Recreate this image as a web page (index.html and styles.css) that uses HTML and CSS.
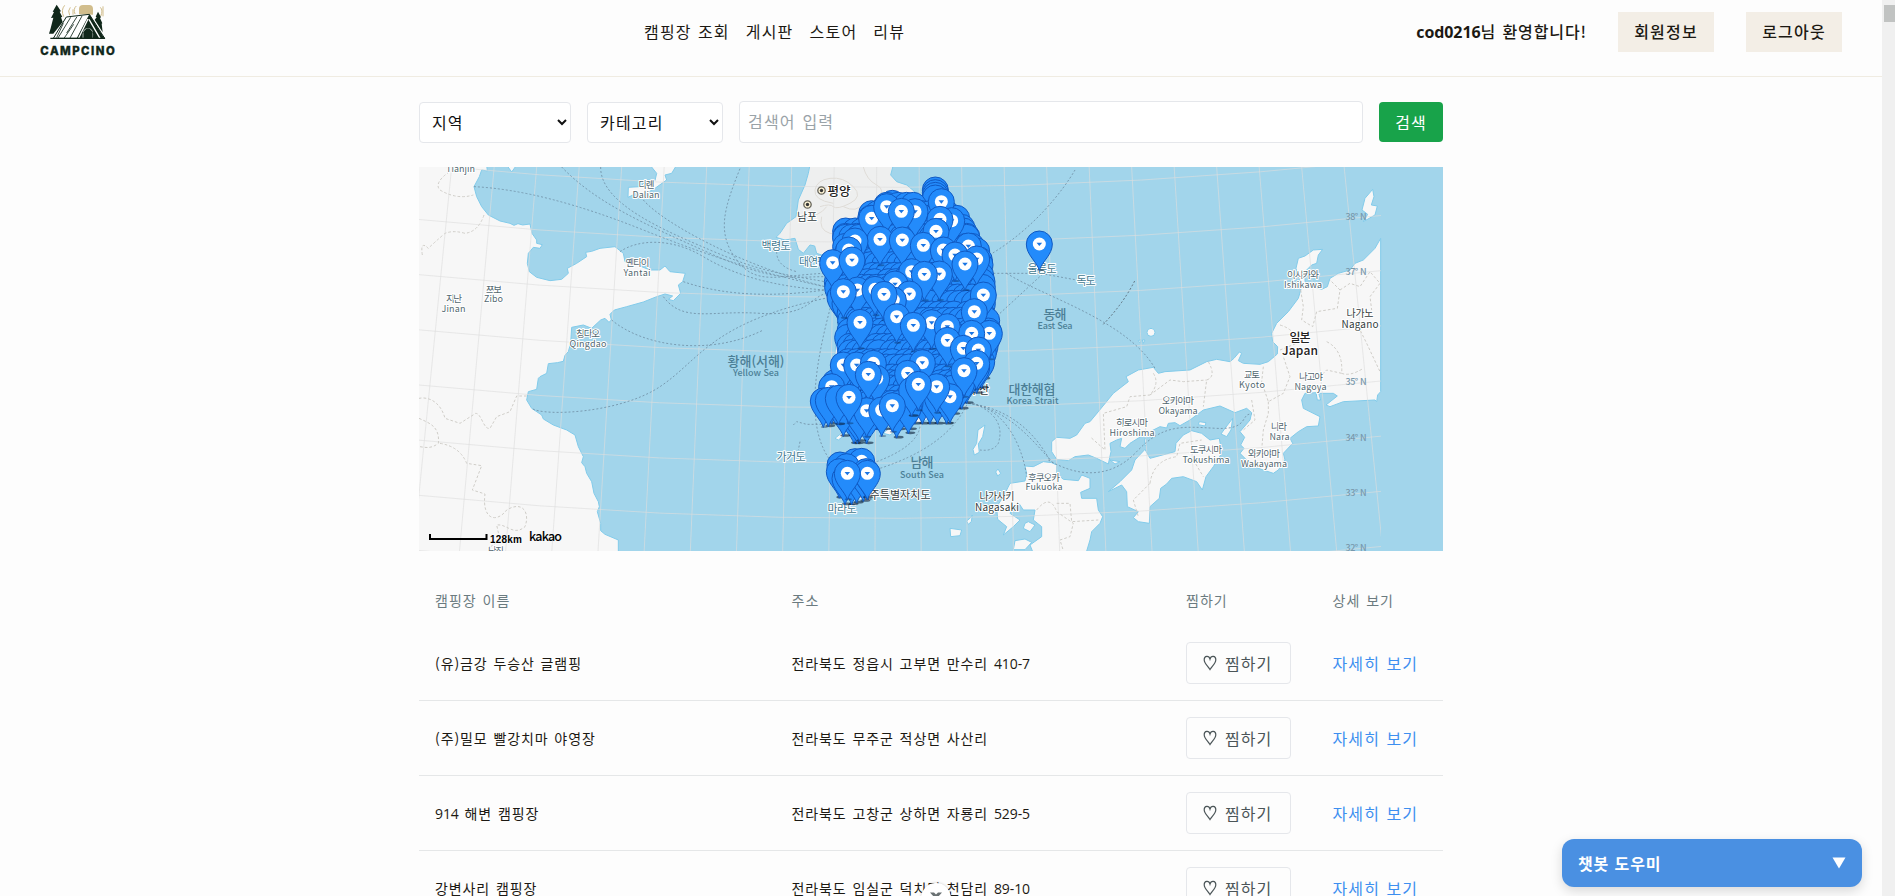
FILE: index.html
```html
<!DOCTYPE html>
<html lang="ko">
<head>
<meta charset="utf-8">
<title>CAMPCINO</title>
<link rel="stylesheet" href="styles.css">
</head>
<body>
<div class="window">
<div class="page">
<header class="topbar">
  <a class="brand"><svg width="80" height="60" viewBox="114 0 240 180">
    <g fill="#d1bd8c"><path d="M237 43V27q0-12 12-12h19q11 0 11 12v17z"/><path d="M194 16q-12 14-3 34M211 22q-9 10-2 24M229 18q-10 8-4 24M219 28v16M301 22q9 9 1 27M309 19v30" fill="none" stroke="#d1bd8c" stroke-width="3"/></g>
    <g fill="#10271a"><path d="M170 14l13 20-4 1 8 16-4 1 5 14-28 35h-13l5-16 8-32-7 1 9-18-4-1z"/><path d="M294 35l9 17-3 2 7 16-2 1 3 26-24-38 6-7-3-2z"/></g>
    <path d="M199 51L268 43 314 115H160z" fill="#fff" stroke="#10271a" stroke-width="3"/>
    <path d="M268 43L230 115h18q-2-31 16-31t15 31h34z" fill="#10271a"/>
    <path d="M264 57l-28 57M267 58l33 57" stroke="#fff" stroke-width="4"/>
    <path d="M212 52l-38 62M231 50l-31 49M246 48l-36 66M190 70l-20 43M221 73l-29 42" stroke="#10271a" stroke-width="2.5"/>
    <path d="M250 115v-18q14-24 28 0v18z" fill="#10271a"/><path d="M151 115h164" stroke="#10271a" stroke-width="4"/>
    <text x="121" y="164" textLength="223" class="brand-name">CAMPCINO</text>
  </svg></a>
  <nav class="menu"><a>캠핑장 조회</a><a>게시판</a><a>스토어</a><a>리뷰</a></nav>
  <div class="account"><span class="welcome"><b>cod0216</b>님 환영합니다!</span><button class="account-btn">회원정보</button><button class="account-btn">로그아웃</button></div>
</header>
<main class="content">
  <form class="search">
    <select class="field region"><option>지역</option></select>
    <select class="field category"><option>카테고리</option></select>
    <input class="field keyword" placeholder="검색어 입력">
    <button class="search-btn" type="button">검색</button>
  </form>
  <svg class="map" viewBox="419 167 1024 384">
    <defs>
      <path id="pin-body" d="M0 0C-2.500-9-13-15.500-13-26.500A13 13 0 0 1 13-26.500C13-15.500 2.500-9 0 0Z" fill="#238bfb" stroke="#1059c2"/>
      <g id="pin-back"><ellipse cx="2" cy="-1" rx="5" ry="1.300" fill="#071b33" opacity=".6"/><use href="#pin-body"/></g>
      <g id="pin"><ellipse cx="1" cy="-.5" rx="3.500" ry="1" fill="#071b33" opacity=".35"/><use href="#pin-body"/><circle cy="-26.500" r="6.500" fill="#fff"/><path d="M-2.800-27.800h5.600L0-24.500z" fill="#1b76e3"/></g>
      <clipPath id="tiles"><path d="M419 167h962v384H419z"/></clipPath>
    </defs>
    <g class="land" transform="translate(410 90) scale(.33333)">
      <path d="M20 225H230L232 243 215 240 208 260 192 290 200 320 215 350 235 375 270 393 300 400 312 406 324 401 338 405 360 402 366 430 380 450 380 460 397 464 390 475 370 472 355 490 352 520 358 545 380 562 420 572 455 568 475 550 472 535 500 520 530 500 527 487 545 484 570 475 615 470 640 490 645 515 690 528 720 540 750 540 765 528 780 545 826 550 818 575 805 585 812 610 790 632 775 628 788 618 765 612 740 620 700 636 650 650 613 660 600 673 604 690 597 697 585 685 572 690 545 715 520 705 485 712 482 760 475 785 465 796 460 814 442 818 415 821 410 850 390 860 385 865 380 898 355 905 350 930 365 955 395 975 400 987 430 1005 470 1020 495 1035 505 1070 520 1100 515 1118 525 1130 530 1150 545 1175 552 1210 565 1235 568 1250 562 1265 572 1300 572 1322 585 1333 625 1350V1390H20z"/>
      <path d="M720 225L740 250 735 272 712 270 690 290 655 292 654 322 680 310 700 315 735 295 770 270 765 255 785 250 800 225zM290 225L305 246 320 225z"/>
      <path class="north" d="M1200 225L1195 250 1185 285 1165 330 1158 380 1130 400 1110 430 1098 442 1125 450 1155 445 1165 478 1180 490 1200 465 1214 468 1220 490 1250 500 1300 600 1400 700H1580V340L1530 318 1490 285 1460 275 1442 255 1450 225z"/>
      <path d="M1300 500L1550 350 1660 480 1740 640 1720 830 1640 960 1490 1010 1290 1010 1270 850z"/>
      <path d="M1275 1045l25-20 5 10-20 15zM1420 1030l30-30 10 20-20 15zM1725 1005L1718 1040 1705 1062 1708 1087 1693 1095 1689 1078 1700 1060 1704 1020zM1620 1315L1655 1320 1650 1337 1622 1340zM1687 1275l-3 20-9 8-5-10 12-10zM1764 1137l8 13-9 8-6-12z"/>
    </g>
    <g class="land" transform="translate(1050 90) scale(.33333)">
      <path d="M992 445L975 475 940 510 915 520 900 540 865 550 840 565 832 590 815 598 775 585 765 575 765 545 785 525 800 520 805 495 818 478 790 480 765 498 745 505 738 535 745 560 755 590 745 625 715 665 680 700 665 730 668 755 683 770 682 792 655 815 630 823 580 820 565 812 575 790 568 786 552 805 540 815 500 808 470 815 420 840 345 845 325 850 310 832 265 840 228 860 235 875 190 910 145 965 120 995 105 1000 80 1035 60 1045 20 1042 5 1055V1085L20 1108 55 1112 75 1100 115 1095 140 1105 175 1122 183 1085 180 1060 200 1050 215 1045 210 1070 225 1075 240 1060 280 1035 330 1010 350 1014 355 1000 375 998 390 1007 420 990 460 960 510 948 555 968 590 955 605 968 600 990 570 1025 584 1042 572 1065 582 1075 570 1090 590 1110 610 1120 610 1130 670 1150 685 1140 705 1110 700 1090 728 1060 720 1045 745 1025 770 1010 805 1008 810 980 760 955 755 930 765 910 798 908 802 930 812 930 806 910 850 910 862 918 828 945 840 950 880 935 975 930 980 935 983 915 992 905z"/>
      <path d="M285 1078L300 1105 375 1085 378 1060 400 1035 425 1022 455 1030 480 1050 508 1045 515 1090 490 1130 468 1160 457 1200 440 1175 400 1160 365 1165 350 1182 332 1195 328 1225 300 1250 298 1300 265 1295 250 1283 265 1265 232 1250 230 1205 215 1185 175 1205 210 1175 245 1140 255 1110zM548 985L543 1020 530 1040 513 1032 525 1015zM448 995L468 998 465 1008 445 1004zM180 1110L210 1115 195 1122zM284 1046h5v20h-5z"/>
      <path d="M-75 1128L-50 1130-20 1115 5 1118 20 1125 20 1150 40 1168 85 1172 95 1155 120 1165 120 1195 92 1207 95 1225 140 1225 145 1260 158 1280 150 1300 125 1325 120 1350 108 1390H-50L-60 1365-25 1340-25 1310-50 1290-45 1260-80 1260-92 1242-110 1250-120 1270-90 1290-110 1310-140 1335-130 1310-157 1288-160 1250-140 1220-120 1180-75 1173-70 1150zM-65 1295l20 10-15 20-20-10 5-15zM-105 1352l30-5 20 10-20 22h-35zM968 298L972 320 964 345 982 348 975 375 940 395 953 373 936 360 945 325z"/>
      <circle cx="303" cy="727" r="12"/><path d="M265 752l8-3-2 11zM277 750l8 0-5 10z"/>
    </g>
    <g id="graticule" clip-path="url(#tiles)"></g>
    <g class="province" transform="translate(410 90) scale(.33333)"><path d="M118 245Q70 280 90 300 140 330 190 315M222 375Q205 425 165 430 130 420 105 430 70 460 55 475 30 450 37 495M350 918H320L300 965 260 980 240 1015C220 1020 215 970 197 970L150 1000 105 985C90 930 50 920 27 925M27 985C60 1000 90 1010 85 1060 60 1080 40 1070 27 1070M90 1060Q150 1070 170 1120L215 1127 187 1200 225 1212C215 1290 260 1300 290 1260 340 1230 360 1270 345 1310 310 1340 290 1300 260 1305L270 1350 235 1375"/></g>
    <path class="district" transform="translate(410 90) scale(.33333)" d="M1360 231Q1370 270 1400 285T1400 330 1440 320M1270 340Q1210 330 1215 300T1260 265 1330 290 1320 340 1270 350 1230 350M1170 385Q1230 380 1250 350M1235 380Q1225 420 1260 430T1290 410M1300 350Q1340 370 1360 340"/>
    <g class="province" transform="translate(1050 90) scale(.33333)"><path d="M752 600L760 650 755 690 788 710 800 665 862 655 870 600 840 570M870 600L900 580 930 590 960 545 990 580 960 620 965 660M690 705Q740 720 740 760L690 780M830 755Q880 780 875 850L830 840 800 870M925 710L950 760 990 845M875 850Q900 860 940 835M475 815Q500 860 470 870L460 950M310 850Q330 880 300 915L240 920 230 950 160 970 165 1080 120 1040M300 915L360 870 400 875 470 870M640 830L635 875 655 935 700 910 720 860 700 800M655 935L655 970 640 1020 635 1080M605 930L615 990 580 1020M300 1180Q310 1110 380 1100L390 1060 455 1050M300 1180L250 1230 265 1280M430 1110L460 1160M-40 1260Q0 1210 20 1265L70 1300 60 1340 30 1350 40 1382M20 1240L60 1240 65 1295 145 1290"/></g>
    <g class="ferry" transform="translate(410 90) scale(.33333)"><path d="M192 290Q400 300 700 420T1245 590M455 231C560 340 700 400 900 490S1150 560 1245 560M572 231C570 340 760 420 900 480S1100 550 1245 575M700 330C760 400 1000 530 1245 590M630 485C680 450 780 440 880 500S1100 590 1245 600M990 236C940 360 920 430 980 510S1110 555 1245 550M1100 485Q1100 530 1160 545M820 575C950 620 1100 620 1245 600M760 620C820 700 900 660 1050 670S1200 620 1250 610M605 690C700 770 900 800 1060 720M1245 625C900 700 870 810 750 890S400 980 365 955M1270 620C1220 800 1180 1000 1260 1110M1150 1005L1160 995 1190 1003H1250M1170 1055L1165 1080M1995 240C1960 300 1870 420 1730 500M1770 670L1900 550M1750 550H1890L2000 570M1790 550C1900 620 2150 690 2235 835M1675 940C1790 950 1840 1080 1850 1160M1675 940C1790 960 1850 1030 1930 1120M1675 940C1840 960 1900 1080 1920 1110M1690 940Q1790 980 1765 1060 1750 1085 1710 1080M1670 945Q1610 1070 1410 1135M1530 1010Q1520 1070 1400 1115"/></g>
    <g class="ferry" transform="translate(1050 90) scale(.33333)"><path d="M254 573Q220 640 160 703" stroke="#53616d"/><path d="M-5 1110C80 1160 180 1170 260 1085S400 1010 500 1015 570 970 605 972"/></g>
    <g id="labels"></g>
    <g transform="translate(821.500 190.500)"><circle r="3.700" fill="#fff5d6" stroke="#66645b" stroke-width="1.300"/><circle r="1.700" fill="#333"/></g>
    <g transform="translate(807.500 204.500)"><circle r="3.700" fill="#fff5d6" stroke="#66645b" stroke-width="1.300"/><circle r="1.700" fill="#333"/></g>
    <g id="pins"></g>
    <path d="M430 534v5h56.500v-5" fill="none" stroke="#000" stroke-width="2"/>
    <text class="scale" x="490" y="543" textLength="32">128km</text><text class="kakao" x="529" y="541" textLength="33">kakao</text>
  </svg>
  <table class="camps">
    <thead><tr><th class="c-name">캠핑장 이름</th><th class="c-addr">주소</th><th class="c-like">찜하기</th><th>상세 보기</th></tr></thead>
    <tbody>
      <tr><td>(유)금강 두승산 글램핑</td><td>전라북도 정읍시 고부면 만수리 <span class="num">410-7</span></td><td><button class="like"><svg class="heart" viewBox="0 0 14 16"><path d="M7 14.500C5 11 1.200 8.500 1.200 4.700 1.200.4 6 .2 7 4 8 .2 12.800.4 12.800 4.700 12.800 8.500 9 11 7 14.500z"/></svg><span>찜하기</span></button></td><td><a class="more">자세히 보기</a></td></tr>
      <tr><td>(주)밀모 빨강치마 야영장</td><td>전라북도 무주군 적상면 사산리</td><td><button class="like"><svg class="heart" viewBox="0 0 14 16"><path d="M7 14.500C5 11 1.200 8.500 1.200 4.700 1.200.4 6 .2 7 4 8 .2 12.800.4 12.800 4.700 12.800 8.500 9 11 7 14.500z"/></svg><span>찜하기</span></button></td><td><a class="more">자세히 보기</a></td></tr>
      <tr><td><span class="num">914</span> 해변 캠핑장</td><td>전라북도 고창군 상하면 자룡리 <span class="num">529-5</span></td><td><button class="like"><svg class="heart" viewBox="0 0 14 16"><path d="M7 14.500C5 11 1.200 8.500 1.200 4.700 1.200.4 6 .2 7 4 8 .2 12.800.4 12.800 4.700 12.800 8.500 9 11 7 14.500z"/></svg><span>찜하기</span></button></td><td><a class="more">자세히 보기</a></td></tr>
      <tr><td>강변사리 캠핑장</td><td>전라북도 임실군 덕치면 천담리 <span class="num">89-10</span></td><td><button class="like"><svg class="heart" viewBox="0 0 14 16"><path d="M7 14.500C5 11 1.200 8.500 1.200 4.700 1.200.4 6 .2 7 4 8 .2 12.800.4 12.800 4.700 12.800 8.500 9 11 7 14.500z"/></svg><span>찜하기</span></button></td><td><a class="more">자세히 보기</a></td></tr>
    </tbody>
  </table>
</main>
<div class="close-bubble"><svg width="14" height="14" viewBox="0 0 14 14"><path d="M1 1.500h4l2 2 2-2h4L9 6l4 5H9L7 8.500 5 11H1l4-5z" fill="#6a7173"/></svg></div>
<div class="chatbot"><span>챗봇 도우미</span><svg width="14" height="12" viewBox="0 0 14 12"><path d="M.5.500h13L7 11.500z" fill="#fff"/></svg></div>
</div>
<div class="scrollbar"><div class="thumb"></div></div>
</div>
<script src="map.js"></script>
</body>
</html>
```
FILE: map.js
```javascript
const NS = 'http://www.w3.org/2000/svg';
function add(parent, tag, attrs, text) {
  const el = document.createElementNS(NS, tag);
  for (const k in attrs) el.setAttribute(k, attrs[k]);
  if (text) el.textContent = text;
  document.getElementById(parent).appendChild(el);
}
// Meridians lean outwards, parallels sag in the middle.
for (let k = 0; k < 22; k++) {
  add('graticule', 'path', { d: `M${410 + (125 + 127.5 * k) / 3} 167L${410 + (10 + 138.5 * k) / 3} 551` });
}
for (let k = 0; k < 8; k++) {
  const y = 90 + (223 + 165.5 * k) / 3;
  add('graticule', 'path', { d: `M419 ${y}Q900 ${y + 48} 1381 ${y - 4}` });
}
// [text, centre x, baseline, width, size, style]
[
  ['Tianjin', 460.5, 172, 29, 9, 'city'], ['다롄', 646.5, 188, 16, 9.5, 'city'], ['Dalian', 646, 198, 27, 9, 'city'],
  ['옌타이', 637.5, 266, 24, 9.5, 'city'], ['Yantai', 637, 276, 27, 9, 'city'],
  ['쯔보', 494, 292.5, 16, 9.5, 'city'], ['Zibo', 493.5, 302, 19, 9, 'city'],
  ['지난', 454, 302, 16, 9.5, 'city'], ['Jinan', 453.5, 312, 24, 9, 'city'],
  ['칭다오', 588, 336.5, 24, 9.5, 'city'], ['Qingdao', 588, 346.5, 37, 9, 'city'],
  ['난징', 496, 554, 16, 9.5, 'city'],
  ['평양', 839, 195.5, 23, 12.5, 'strong'], ['남포', 807, 220.5, 20, 11, 'dark'],
  ['백령도', 776, 250, 29, 11, 'isle'], ['대연평', 813, 266, 28, 11, 'isle'],
  ['황해(서해)', 756, 366, 57, 13, 'sea'], ['Yellow Sea', 756, 376, 46, 9, 'sea'],
  ['가거도', 791, 461, 29, 11, 'isle'], ['마라도', 842, 513, 29, 11, 'isle'],
  ['제주특별자치도', 895, 498.5, 71, 11, 'dark'], ['부산', 979, 393.5, 20, 11, 'dark'],
  ['남해', 922, 467, 23, 13, 'sea'], ['South Sea', 922, 478, 44, 9, 'sea'],
  ['동해', 1055, 319, 23, 13, 'sea'], ['East Sea', 1055, 328.5, 35, 9, 'sea'],
  ['대한해협', 1032, 394, 47, 13, 'sea'], ['Korea Strait', 1032.5, 404, 52, 9, 'sea'],
  ['울릉도', 1042, 273, 29, 11, 'isle'], ['독도', 1086, 284.5, 19, 11, 'isle'],
  ['후쿠오카', 1044, 480.5, 32, 9.5, 'city'], ['Fukuoka', 1044, 490, 37, 9, 'city'],
  ['나가사키', 997, 500, 35, 10, 'dark'], ['Nagasaki', 997, 511, 44, 10, 'dark'],
  ['히로시마', 1132, 426, 32, 9.5, 'city'], ['Hiroshima', 1132, 436, 45, 9, 'city'],
  ['오카야마', 1178, 404, 32, 9.5, 'city'], ['Okayama', 1178, 414, 39, 9, 'city'],
  ['도쿠시마', 1206, 453, 32, 9.5, 'city'], ['Tokushima', 1206, 463, 47, 9, 'city'],
  ['와카야마', 1264, 457, 32, 9.5, 'city'], ['Wakayama', 1264, 467, 46, 9, 'city'],
  ['나라', 1279, 430, 16, 9.5, 'city'], ['Nara', 1279.5, 440, 20, 9, 'city'],
  ['교토', 1252, 378, 16, 9.5, 'city'], ['Kyoto', 1252, 388, 26, 9, 'city'],
  ['나고야', 1311, 380, 24, 9.5, 'city'], ['Nagoya', 1310.5, 390, 32, 9, 'city'],
  ['이시카와', 1303, 278, 32, 9.5, 'city'], ['Ishikawa', 1303, 288, 38, 9, 'city'],
  ['나가노', 1360, 317, 27, 10, 'dark'], ['Nagano', 1360, 327.5, 37, 10, 'dark'],
  ['일본', 1300, 341.5, 21, 12, 'strong'], ['Japan', 1300, 354.5, 36, 12, 'strong'],
  ['38° N', 1356, 220, 21, 9, 'lat'], ['37° N', 1356, 275, 21, 9, 'lat'], ['35° N', 1356, 385, 21, 9, 'lat'],
  ['34° N', 1356, 441, 21, 9, 'lat'], ['33° N', 1356, 496, 21, 9, 'lat'], ['32° N', 1356, 551, 21, 9, 'lat'],
].forEach(([t, x, y, w, s, c]) => add('labels', 'text', { x: x - w / 2, y, textLength: w, 'font-size': s, class: 'lb ' + c }, t));

// Marker heads, in thirds of a pixel from (780, 160).
const pin = (x, y, id = 'pin') => add('pins', 'use', { href: '#' + id, x: 780 + x / 3, y: 160 + y / 3 + 26.5 });
[90, 98, 106, 114].forEach(y => pin(466, y, 'pin-back'));
pin(337, 130, 'pin-back');
// [y, first x, last x] of each dense row
[[142, 320, 400], [160, 275, 500], [180, 272, 530], [200, 262, 545], [217, 197, 550], [226, 197, 560], [235, 197, 560], [255, 197, 575], [275, 205, 590],
 [295, 185, 598], [315, 172, 600], [340, 175, 602], [365, 172, 606], [388, 173, 607], [410, 180, 606], [435, 195, 607], [460, 210, 605],
 [485, 212, 620], [510, 210, 625], [535, 203, 622], [555, 210, 615], [580, 212, 610], [600, 205, 605], [622, 200, 590], [645, 190, 560],
 [668, 165, 545], [690, 160, 520], [712, 155, 500], [735, 190, 390], [770, 222, 260]].forEach(([y, a, b], r) => {
  const n = Math.max(1, Math.round((b - a) / 24));
  for (let i = 0; i <= n; i++) {
    const edge = i === 0 || i === n;
    const j = edge ? 0 : ((i * 17 + r * 23) % 19) - 9;
    pin(a + (b - a) * i / n + j, y + ((i * 13 + r * 7) % 13) - 6, 'pin-back');
  }
});
[[190,750],[350,755],[385,742],[238,765]].forEach(([x, y]) => pin(x, y, 'pin-back'));
[[484,125],[275,175],[320,140],[405,155],[364,154],[515,182],[480,178],[468,214],[300,238],[225,243],[367,240],[565,258],[430,256],
 [490,270],[525,285],[590,297],[206,270],[158,308],[216,300],[555,312],[395,335],[478,342],[433,343],
 [232,390],[190,395],[610,405],[345,372],[285,388],[388,402],[340,420],[312,403],[583,455],[350,470],[455,488],[240,487],[628,520],
 [400,496],[502,500],[575,520],[502,541],[550,565],[595,570],[190,615],[230,615],[280,610],[427,608],[383,640],
 [590,610],[552,632],[155,680],[290,655],[265,643],[130,723],[145,721,1],[175,715,1],[260,752],[207,712],[510,710],[470,680],[395,690,1],[415,673],
 [305,750],[337,737],[225,905,1],[245,904],[180,915,1],[200,920,1],[178,935,1],[195,955,1],[215,955,1],[230,950,1],[250,945,1],[258,935,1],
 [262,940],[202,940],[778,252]].forEach(([x, y, hidden]) => pin(x, y, hidden ? 'pin-back' : 'pin'));
```
FILE: styles.css
```css
* { box-sizing: border-box; }
body { margin: 0; background: #fdfdfd; color: #1c1913; font: 16px/24px "Noto Sans CJK KR", sans-serif; letter-spacing: 1px; }
button, input, select { font: inherit; letter-spacing: inherit; color: inherit; }
.window { display: flex; height: 896px; overflow: hidden; }
.page { position: relative; flex: 1; height: 896px; overflow: hidden; }
.topbar { position: relative; display: flex; justify-content: space-between; height: 77px; padding: 0 40px; border-bottom: 1px solid #f0ece2; }
.brand { margin-left: -2px; height: 60px; }
.brand svg { display: block; }
.brand-name { font: 800 34px Inter, sans-serif; fill: #10271a; stroke: #10271a; stroke-width: 1px; letter-spacing: 0; }
.menu { position: absolute; left: 644px; top: 19px; display: flex; gap: 16px; font-size: 16px; letter-spacing: 1.2px; word-spacing: .5px; }
.account { display: flex; align-items: flex-start; padding-top: 12px; }
.welcome { padding: 7px 31px 0 0; font-weight: 500; letter-spacing: .9px; word-spacing: 1px; }
.welcome b { font-family: "Open Sans", sans-serif; font-weight: 700; letter-spacing: -.1px; }
.account-btn { width: 96px; height: 40px; padding: 0 0 2px; border: 0; background: #f3eee6; font-weight: 500; letter-spacing: 1.2px; }
.account-btn + .account-btn { margin-left: 32px; }
.content { width: 1024px; margin: 24px 0 0 419px; }
.search { display: flex; align-items: center; gap: 16px; height: 42px; margin-bottom: 24px; }
.field { height: 41px; border: 1px solid #e5e7eb; border-radius: 4px; background: #fff; color: #111; }
.region { width: 152px; padding: 0 8px; }
.category { width: 136px; padding: 0 8px; letter-spacing: 1.2px; }
.keyword { flex: 1; height: 42px; padding: 0 8px 2px; min-width: 0; letter-spacing: 1.2px; word-spacing: 1px; }
.keyword::placeholder { color: #9aa3a8; }
.search-btn { width: 64px; height: 40px; padding: 0 0 1px; border: 0; border-radius: 4px; background: #18a34a; color: #fff; }
.map { display: block; width: 1024px; height: 384px; background: #a2d5eb; }
.land path, .land circle { fill: #f7f7f7; stroke: #82cbea; stroke-width: 3; }
.land .north { fill: #eeefef; }
#graticule path { fill: none; stroke: #dedede; stroke-width: .9; opacity: .7; }
.province path { fill: none; stroke: #cfcdc8; stroke-width: 3; stroke-dasharray: 8 6; }
.district { fill: none; stroke: #dfdcd7; stroke-width: 3; }
.ferry path { fill: none; stroke: #7292a8; stroke-width: 2.6; stroke-dasharray: 6 6; }
.ferry path[stroke] { stroke: #53616d; }
.lb { letter-spacing: 0; paint-order: stroke; stroke: #fff; stroke-width: 2px; stroke-linejoin: round; fill: #52676f; font-weight: 400; }
.lb.dark { fill: #333d40; }
.lb.strong { fill: #222; font-weight: 500; }
.lb.isle { fill: #42788f; }
.lb.sea { fill: #4c7f96; stroke: none; font-weight: 500; }
.lb.lat { fill: #7898ac; stroke: none; font-weight: 500; }
.scale { font: bold 10px "Liberation Sans", sans-serif; letter-spacing: 0; stroke: #fff; stroke-width: 1px; paint-order: stroke; }
.kakao { font: 500 12.500px "Noto Sans CJK KR", sans-serif; letter-spacing: 0; }
.camps { width: 1024px; margin-top: 23px; border-collapse: separate; border-spacing: 0; table-layout: fixed; font-size: 14px; line-height: 20px; letter-spacing: .9px; word-spacing: 1px; }
.camps th { height: 52px; padding: 0 16px; text-align: left; font-weight: 400; color: #6b7b80; letter-spacing: 1px; }
.c-name { width: 356.500px; }
.c-addr { width: 394.500px; }
.c-like { width: 146.500px; }
.camps td { height: 75px; padding: 0 16px; border-bottom: 1px solid #e5e7e8; white-space: nowrap; }
.num { font-family: "Open Sans", sans-serif; letter-spacing: -.1px; }
.like { display: flex; align-items: center; gap: 8px; width: 105px; height: 42px; padding: 0 0 0 16px; border: 1px solid #e5e7eb; border-radius: 4px; background: none; color: #4b5558; font-size: 16px; letter-spacing: 1px; }
.like span { padding-bottom: 1px; }
.heart { width: 14px; height: 16px; fill: none; stroke: #4b5558; stroke-width: 1.200; }
.more { color: #3d8ff0; font-size: 16px; letter-spacing: 1.1px; }
.close-bubble { position: absolute; left: 921px; top: 883px; width: 30px; height: 30px; padding: 8px; border-radius: 50%; background: #fff; box-shadow: 0 0 3px rgba(0,0,0,.2); line-height: 0; }
.chatbot { position: absolute; left: 1562px; top: 839px; display: flex; align-items: center; justify-content: space-between; width: 300px; height: 48px; padding: 0 16px 1px; border-radius: 12px; background: #4a90e2; color: #fff; font-weight: 700; letter-spacing: .9px; box-shadow: 0 4px 12px rgba(0,0,0,.15); }
.scrollbar { width: 13px; padding: 5px 0 0 2px; background: #f0f0f0; }
.thumb { height: 17px; background: #c1c3c2; }
```
